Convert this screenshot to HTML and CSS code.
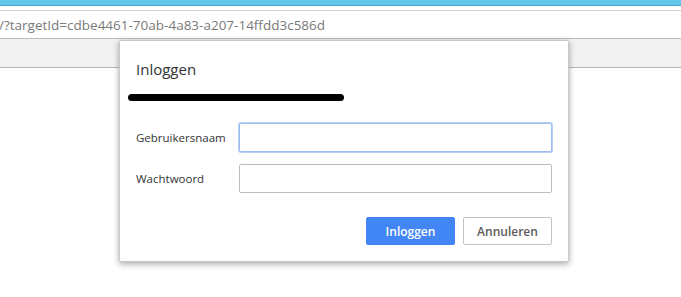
FILE: index.html
```html
<!DOCTYPE html>
<html>
	<head>
		<meta charset="utf-8">
		<title>Inloggen</title>

		<link rel="stylesheet" href="styles.css">
	</head>
	<body>
		<div class="topbar"></div>
		<div class="address">
			<span class="url">/?targetId=cdbe4461-70ab-4a83-a207-14ffdd3c586d</span>
		</div>
		<div class="toolbar"></div>

		<div class="dialog">
			<h1 class="title">Inloggen</h1>
			<div class="scribble"></div>
			<form class="form">
				<div class="row">
					<label>Gebruikersnaam</label>
					<input type="text" class="field focus">
				</div>
				<div class="row">
					<label>Wachtwoord</label>
					<input type="password" class="field">
				</div>
				<div class="buttons">
					<button type="button" class="btn primary">Inloggen</button>
					<button type="button" class="btn">Annuleren</button>
				</div>
			</form>
		</div>
	</body>
</html>
```

FILE: styles.css
```css
* {
	margin: 0;
	padding: 0;
	box-sizing: border-box;
}

body {
	background: #ffffff;
	font-family: "Open Sans", "Noto Sans", sans-serif;
	position: relative;
	height: 297px;
	overflow: hidden;
}

.topbar {
	height: 6px;
	background: #64c8ea;
	border-bottom: 1px solid #4aa3cc;
}

.address {
	margin-top: 4px;
	height: 29px;
	border-top: 1px solid #cfcfcf;
	border-bottom: 1px solid #bdbdbd;
	display: flex;
	align-items: center;
	background: #ffffff;
}

.url {
	font-size: 13.5px;
	color: #7a7a7a;
	margin-left: -1px;
}

.toolbar {
	height: 29px;
	background: #f2f2f2;
	border-bottom: 1px solid #b8b8b8;
}

.dialog {
	position: absolute;
	left: 119px;
	top: 40px;
	width: 450px;
	height: 222px;
	background: #ffffff;
	border: 1px solid #c8c8c8;
	border-radius: 2px;
	box-shadow: 0 2px 6px rgba(0, 0, 0, 0.35);
	padding: 18px 16px 0 16px;
}

.title {
	font-size: 15px;
	font-weight: normal;
	color: #333333;
	line-height: 20px;
}

.scribble {
	margin: 15px 0 0 -8px;
	width: 216px;
	height: 7px;
	border-radius: 4px;
	background: #000000;
}

.form {
	margin-top: 22px;
	display: flex;
	flex-direction: column;
	gap: 12px;
}

.row {
	display: flex;
	align-items: center;
}

.row label {
	width: 103px;
	font-size: 11.5px;
	color: #333333;
}

.field {
	width: 313px;
	height: 29px;
	border: 1px solid #bdbdbd;
	border-radius: 2px;
	background: #ffffff;
	outline: none;
}

.field.focus {
	border-color: #9dbcf2;
	box-shadow: 0 0 0 1px #b9cff6;
}

.buttons {
	margin-top: 12px;
	display: flex;
	justify-content: flex-end;
	gap: 8px;
	width: 416px;
}

.btn {
	width: 89px;
	height: 28px;
	border: 1px solid #c2c2c2;
	border-radius: 2px;
	background: #ffffff;
	color: #5c5c5c;
	font-family: "Open Sans", "Noto Sans", sans-serif;
	font-size: 12px;
	font-weight: 600;
}

.btn.primary {
	background: #4285f4;
	border-color: #4285f4;
	color: #ffffff;
}
```
